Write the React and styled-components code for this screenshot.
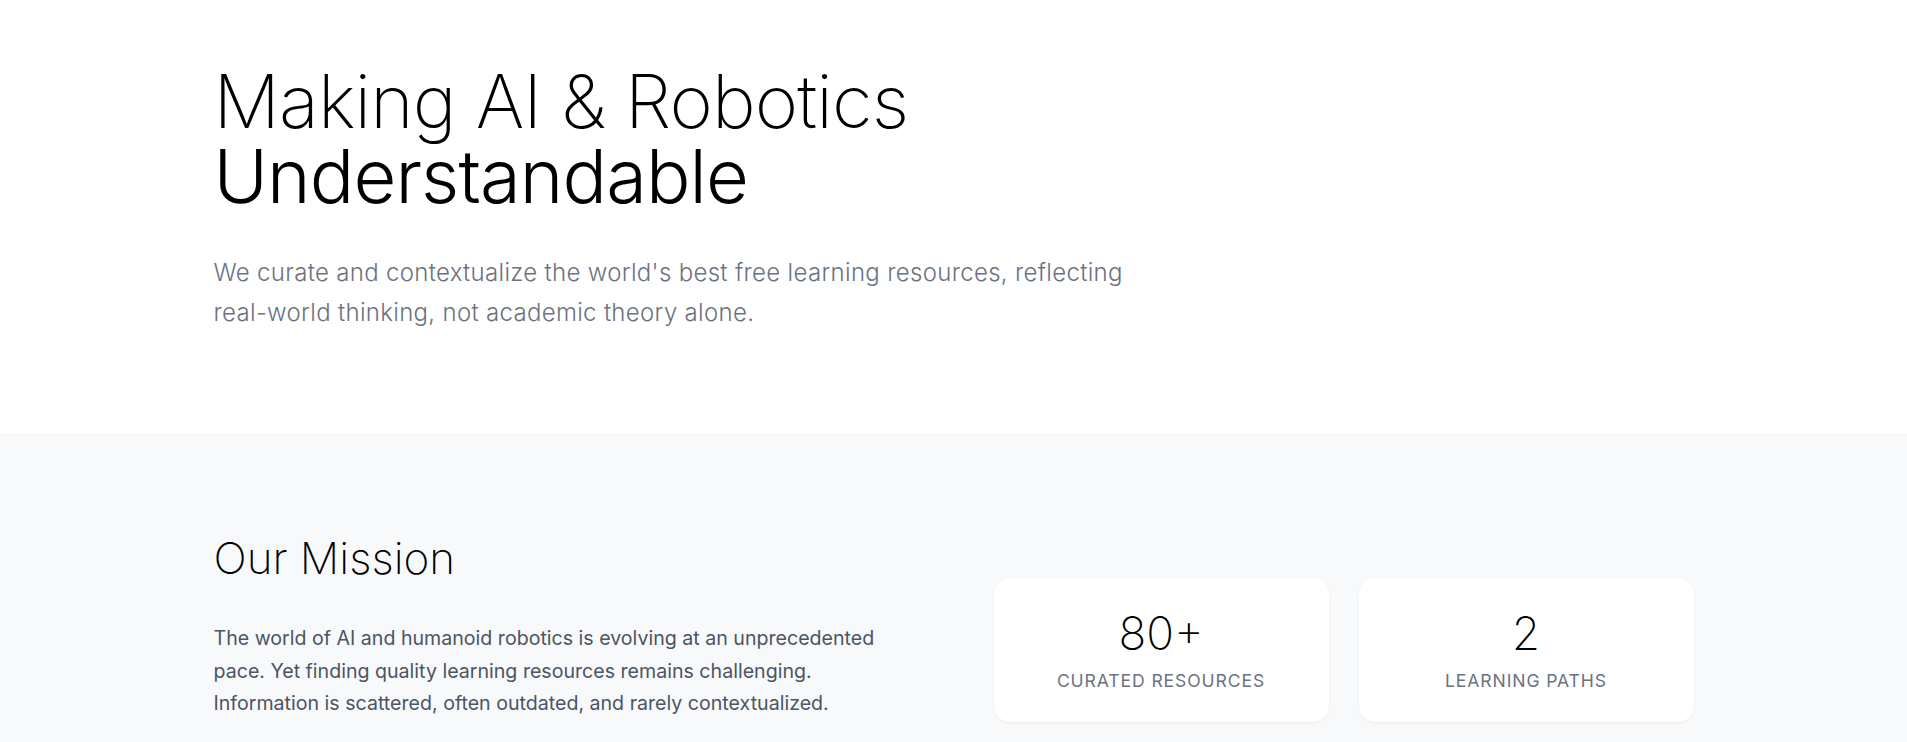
import React from "react";
import styled, { createGlobalStyle } from "styled-components";

const GlobalStyle = createGlobalStyle`
  * { box-sizing: border-box; }
  html, body { margin: 0; padding: 0; background: #ffffff; }
  body {
    font-family: Inter, "Noto Sans", "Liberation Sans", sans-serif;
    color: #0a0a0a;
    -webkit-font-smoothing: antialiased;
  }
`;

const Container = styled.div`
  max-width: 1480px;
  margin: 0 auto;
`;

const Hero = styled.section`
  background: #ffffff;
  padding: 64px 0 100px;
`;

const Title = styled.h1`
  margin: 0;
  font-size: 74px;
  line-height: 1.01;
  letter-spacing: -0.012em;
  color: #000000;
  font-weight: 200;
`;

const TitleLine = styled.span`
  display: block;
  font-weight: ${(p) => (p.$strong ? 300 : 200)};
`;

const Lead = styled.p`
  margin: 40px 0 0;
  max-width: 940px;
  font-size: 24px;
  line-height: 40px;
  font-weight: 300;
  letter-spacing: 0.013em;
  color: #6b7280;
`;

const Mission = styled.section`
  background: #f8f9fa;
  padding: 99px 0 80px;
`;

const MissionGrid = styled.div`
  display: grid;
  grid-template-columns: 1fr 1fr;
  column-gap: 80px;
  align-items: start;
`;

const SectionTitle = styled.h2`
  margin: 0;
  font-size: 44px;
  line-height: 1.2;
  font-weight: 200;
  color: #000000;
`;

const Body = styled.p`
  margin: 37px 0 0;
  max-width: 680px;
  font-size: 19.6px;
  line-height: 32.6px;
  font-weight: 400;
  color: #4b5563;
`;

const Stats = styled.div`
  display: grid;
  grid-template-columns: 1fr 1fr;
  gap: 30px;
  margin-top: 46px;
`;

const StatCard = styled.div`
  background: #ffffff;
  border-radius: 16px;
  padding: 32px 24px 29px;
  text-align: center;
  box-shadow: 0 1px 3px rgba(0, 0, 0, 0.04), 0 1px 2px rgba(0, 0, 0, 0.02);
`;

const StatValue = styled.div`
  font-size: 46px;
  line-height: 1;
  font-weight: 200;
  color: #000000;
`;

const StatLabel = styled.div`
  margin-top: 13px;
  font-size: 17.6px;
  line-height: 24px;
  letter-spacing: 0.05em;
  text-transform: uppercase;
  color: #6b7280;
`;

const stats = [
  { value: "80+", label: "Curated Resources" },
  { value: "2", label: "Learning Paths" },
];

export default function App() {
  return (
    <>
      <GlobalStyle />
      <Hero>
        <Container>
          <Title>
            <TitleLine>Making AI &amp; Robotics</TitleLine>
            <TitleLine $strong>Understandable</TitleLine>
          </Title>
          <Lead>
            We curate and contextualize the world's best free learning resources,
            reflecting real-world thinking, not academic theory alone.
          </Lead>
        </Container>
      </Hero>
      <Mission>
        <Container>
          <MissionGrid>
            <div>
              <SectionTitle>Our Mission</SectionTitle>
              <Body>
                The world of AI and humanoid robotics is evolving at an unprecedented
                pace. Yet finding quality learning resources remains challenging.
                Information is scattered, often outdated, and rarely contextualized.
              </Body>
            </div>
            <Stats>
              {stats.map((s) => (
                <StatCard key={s.label}>
                  <StatValue>{s.value}</StatValue>
                  <StatLabel>{s.label}</StatLabel>
                </StatCard>
              ))}
            </Stats>
          </MissionGrid>
        </Container>
      </Mission>
    </>
  );
}
